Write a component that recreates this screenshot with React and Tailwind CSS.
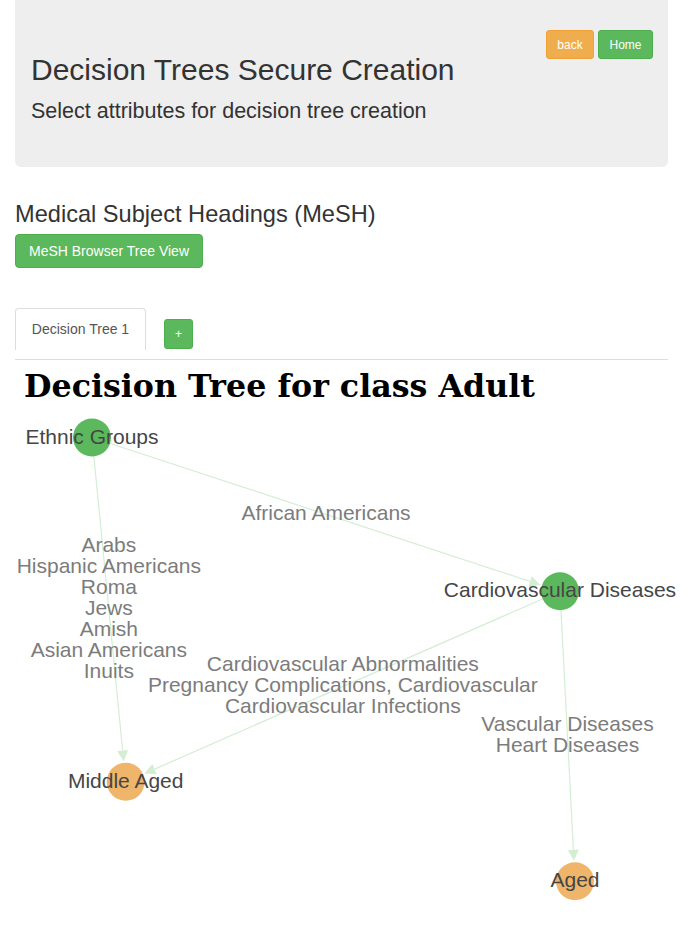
const OFF = 406;
const R = 19;
const nodes = {
  E: { x: 92, y: 437.5 - OFF, label: "Ethnic Groups", color: "#5cb85c" },
  C: { x: 560, y: 591.3 - OFF, label: "Cardiovascular Diseases", color: "#5cb85c" },
  M: { x: 125.7, y: 781.8 - OFF, label: "Middle Aged", color: "#efb56a" },
  A: { x: 575, y: 881.3 - OFF, label: "Aged", color: "#efb56a" },
};
const edges = [
  { from: "E", to: "M", lines: ["Arabs", "Hispanic Americans", "Roma", "Jews", "Amish", "Asian Americans", "Inuits"] },
  { from: "E", to: "C", lines: ["African Americans"] },
  { from: "C", to: "M", lines: ["Cardiovascular Abnormalities", "Pregnancy Complications, Cardiovascular", "Cardiovascular Infections"] },
  { from: "C", to: "A", lines: ["Vascular Diseases", "Heart Diseases"] },
];
const EDGE = "#d3eed3";

function Edge({ e }) {
  const s = nodes[e.from];
  const t = nodes[e.to];
  const dx = t.x - s.x;
  const dy = t.y - s.y;
  const len = Math.hypot(dx, dy);
  const ux = dx / len;
  const uy = dy / len;
  const tipX = t.x - ux * (R + 1.5);
  const tipY = t.y - uy * (R + 1.5);
  const bX = tipX - ux * 11;
  const bY = tipY - uy * 11;
  const px = -uy * 5.5;
  const py = ux * 5.5;
  return (
    <g>
      <line x1={s.x} y1={s.y} x2={bX} y2={bY} stroke={EDGE} strokeWidth="1.2" />
      <polygon points={`${tipX},${tipY} ${bX + px},${bY + py} ${bX - px},${bY - py}`} fill={EDGE} />
    </g>
  );
}

function EdgeLabel({ e }) {
  const s = nodes[e.from];
  const t = nodes[e.to];
  const mx = (s.x + t.x) / 2;
  const my = (s.y + t.y) / 2;
  const n = e.lines.length;
  return (
    <g>
      {e.lines.map((l, i) => (
        <text key={i} x={mx} y={my + 5.5 + (i - (n - 1) / 2) * 21} textAnchor="middle" fontSize="21" fill="#7c7c7c">
          {l}
        </text>
      ))}
    </g>
  );
}

export default function App() {
  return (
    <div className="min-h-[930px] w-[683px] bg-white px-[15px] font-['Liberation_Sans',Arial,sans-serif] text-[#333]">
      <div className="h-[167px] rounded-b-[6px] bg-[#eeeeee] pt-[30px] pl-4 pr-[15px]">
        <div className="float-right flex gap-1">
          <button className="h-[29px] w-[48px] rounded-[3px] border border-[#eea236] bg-[#f0ad4e] text-[12px] text-white">back</button>
          <button className="h-[29px] w-[55px] rounded-[3px] border border-[#4cae4c] bg-[#5cb85c] text-[12px] text-white">Home</button>
        </div>
        <h1 className="mt-[23px] text-[30px] leading-[33px]">Decision Trees Secure Creation</h1>
        <p className="mt-[10px] text-[21.5px] leading-[30px]">Select attributes for decision tree creation</p>
      </div>

      <h3 className="mt-[34px] text-[23.6px] leading-[26.4px]">Medical Subject Headings (MeSH)</h3>
      <button className="mt-[7px] h-[34px] rounded-[4px] border border-[#4cae4c] bg-[#5cb85c] px-[13px] text-[14px] text-white">MeSH Browser Tree View</button>

      <div className="mt-[40px] flex items-end">
        <div className="flex h-[42px] w-[131px] items-center justify-center rounded-t-[4px] border border-b-0 border-[#dddddd] text-[14px] text-[#555]">Decision Tree 1</div>
        <button className="mb-[1px] ml-[18px] h-[30px] w-[29px] rounded-[3px] border border-[#4cae4c] bg-[#5cb85c] text-[12px] text-white">+</button>
      </div>
      <div className="mt-[9px] border-t border-[#dddddd]" />

      <h1 className="mt-[6px] pl-[9px] font-['DejaVu_Serif',serif] text-[31.7px] font-bold leading-[40px] text-black">Decision Tree for class Adult</h1>

      <svg width="695" height="524" className="-mx-[15px] block" viewBox="0 0 695 524">
        {edges.map((e, i) => (
          <Edge key={i} e={e} />
        ))}
        {edges.map((e, i) => (
          <EdgeLabel key={i} e={e} />
        ))}
        {Object.values(nodes).map((n, i) => (
          <circle key={i} cx={n.x} cy={n.y} r={R} fill={n.color} />
        ))}
        {Object.values(nodes).map((n, i) => (
          <text key={i} x={n.x} y={n.y + 6} textAnchor="middle" fontSize="21" fill="#464646">
            {n.label}
          </text>
        ))}
      </svg>
    </div>
  );
}
